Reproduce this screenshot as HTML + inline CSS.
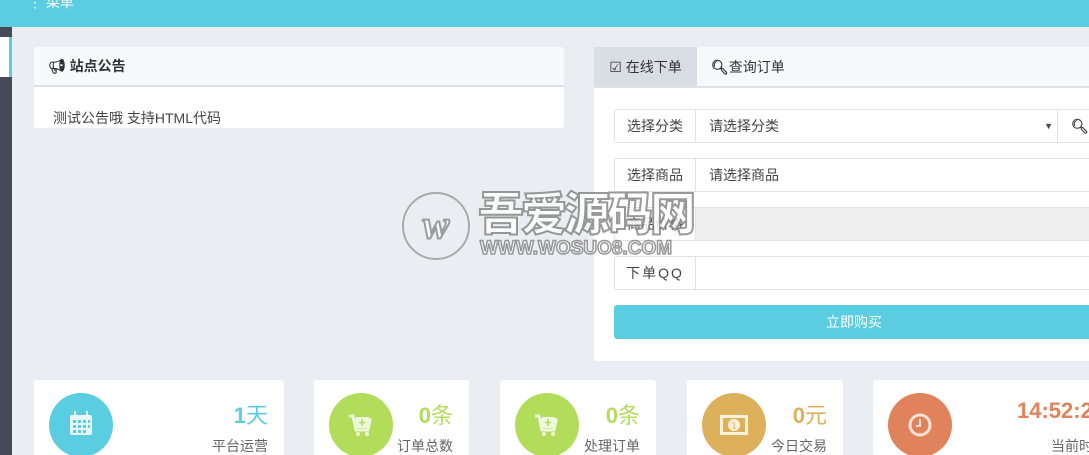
<!DOCTYPE html>
<html><head><meta charset="utf-8"><style>
*{margin:0;padding:0;box-sizing:border-box}
html{width:1089px;height:455px;overflow:hidden}
body{width:1089px;height:455px;overflow:hidden;background:#eaedf1;font-family:"Liberation Sans","Noto Sans CJK SC",sans-serif;position:relative;color:#333;white-space:nowrap}
.abs{position:absolute}
.top{left:0;top:0;width:1089px;height:27px;background:#5bcde0}
.side{left:0;top:27px;width:12px;height:428px;background:#444b57}
.panel{background:#fff;border-radius:3px}
.lbl{position:absolute;left:614px;width:82px;height:34px;border:1px solid #dfe3e8;border-radius:3px 0 0 3px;font-size:14px;line-height:32px;text-align:center;color:#444;background:#fff}
.inp{position:absolute;left:695px;width:400px;height:34px;border:1px solid #dfe3e8;font-size:14px;line-height:32px;padding-left:13px;color:#444;background:#fff}
.card{position:absolute;top:380px;height:80px;background:#fff;border-radius:3px}
.circ{position:absolute;top:13px;left:15px;width:64px;height:64px;border-radius:50%}
.num{position:absolute;top:18px;right:16px;font-size:22px;font-weight:bold}
.num span{font-weight:normal}
.cap{position:absolute;top:56px;right:16px;font-size:14px;color:#666}
</style></head><body>
<div class="abs top"><span style="position:absolute;left:28px;top:-8px;color:#fff;font-size:14px">⋮ 菜单</span></div>
<div class="abs side"><div style="position:absolute;top:10px;left:0;width:12px;height:40px;background:#fff;border-right:3px solid #5bcde0"></div></div>

<div class="abs panel" style="left:34px;top:47px;width:530px;height:81px;overflow:hidden">
 <div style="height:40px;background:#f8f9fb;border-bottom:2px solid #dde1e8;font-size:14px;font-weight:bold;line-height:38px;padding-left:14px;color:#333">&#x1F4E2;&#xFE0E; 站点公告</div>
 <div style="padding:21px 0 0 19px;font-size:14px;color:#444">测试公告哦 支持HTML代码</div>
</div>

<div class="abs panel" style="left:594px;top:47px;width:500px;height:314px">
 <div style="height:41px;background:#f8f9fb;border-bottom:2px solid #dde1e8;font-size:14px;line-height:40px;color:#333">
  <span style="display:inline-block;width:103px;background:#d9dee5;text-align:center;height:39px">☑ 在线下单</span><span style="display:inline-block;padding-left:14px"><b>&#x1F50D;&#xFE0E;</b>查询订单</span>
 </div>
</div>
<div class="lbl" style="top:109px">选择分类</div><div class="inp" style="top:109px;width:363px">请选择分类<span style="position:absolute;right:4px;top:0;font-size:9px">▼</span></div>
<div class="inp" style="top:109px;left:1057px;width:40px;font-weight:bold">&#x1F50D;&#xFE0E;</div>
<div class="lbl" style="top:158px">选择商品</div><div class="inp" style="top:158px">请选择商品</div>
<div class="lbl" style="top:207px">商品价格</div><div class="inp" style="top:207px;background:#eee"></div>
<div class="lbl" style="top:256px;letter-spacing:2px">下单QQ</div><div class="inp" style="top:256px"></div>
<div class="abs" style="left:614px;top:305px;width:480px;height:34px;background:#5bcde0;border-radius:3px;color:#fff;font-size:14px;line-height:34px;text-align:center">立即购买</div>

<!-- watermark -->
<div class="abs" style="left:402px;top:192px;width:68px;height:68px;border:2px solid #999;border-radius:50%;opacity:.8;font:italic bold 40px 'Liberation Serif',serif;color:#fff;-webkit-text-stroke:2px #888;text-align:center;line-height:62px">w</div>
<div class="abs" style="left:478px;top:186px;font:900 46px 'Noto Sans CJK SC',sans-serif;color:#fff;-webkit-text-stroke:2px #888;letter-spacing:-3px;line-height:50px;opacity:.85">吾爱源码网</div>
<div class="abs" style="left:480px;top:238px;font:bold 19px 'Liberation Sans',sans-serif;color:#fff;-webkit-text-stroke:1.5px #888;letter-spacing:0px;opacity:.85">WWW.WOSUO8.COM</div>

<div class="card" style="left:34px;width:250px"><div class="circ" style="background:#5bcde0"><svg width="64" height="64"><g fill="#e6f7fa"><rect x="21" y="22" width="22" height="20" rx="2"/></g><g fill="#5bcde0"><rect x="24" y="27" width="3" height="3"/><rect x="29" y="27" width="3" height="3"/><rect x="34" y="27" width="3" height="3"/><rect x="39" y="27" width="2" height="3"/><rect x="24" y="32" width="3" height="3"/><rect x="29" y="32" width="3" height="3"/><rect x="34" y="32" width="3" height="3"/><rect x="39" y="32" width="2" height="3"/><rect x="24" y="37" width="3" height="3"/><rect x="29" y="37" width="3" height="3"/><rect x="34" y="37" width="3" height="3"/></g><rect x="25" y="18" width="2" height="6" fill="#e6f7fa"/><rect x="37" y="18" width="2" height="6" fill="#e6f7fa"/></svg></div><div class="num" style="color:#5bcde0">1<span>天</span></div><div class="cap">平台运营</div></div>

<div class="card" style="left:314px;width:155px"><div class="circ" style="background:#b1dd5a"><svg width="64" height="64"><path d="M20 23h4l3 14h12l2-10H26" stroke="#eef8dc" stroke-width="3" fill="none"/><rect x="27" y="24" width="13" height="11" fill="#eef8dc"/><path d="M33 26v7M30 29.5h6" stroke="#b1dd5a" stroke-width="1.5"/><circle cx="29" cy="41" r="2" fill="#eef8dc"/><circle cx="38" cy="41" r="2" fill="#eef8dc"/></svg></div><div class="num" style="color:#b1dd5a">0<span>条</span></div><div class="cap">订单总数</div></div>

<div class="card" style="left:500px;width:156px"><div class="circ" style="background:#b1dd5a"><svg width="64" height="64"><path d="M20 23h4l3 14h12l2-10H26" stroke="#eef8dc" stroke-width="3" fill="none"/><rect x="27" y="24" width="13" height="11" fill="#eef8dc"/><path d="M33 26v7M30 29.5h6" stroke="#b1dd5a" stroke-width="1.5"/><circle cx="29" cy="41" r="2" fill="#eef8dc"/><circle cx="38" cy="41" r="2" fill="#eef8dc"/></svg></div><div class="num" style="color:#b1dd5a">0<span>条</span></div><div class="cap">处理订单</div></div>

<div class="card" style="left:687px;width:156px"><div class="circ" style="background:#ddb05c"><svg width="64" height="64"><rect x="18" y="22" width="28" height="20" fill="#fbf1dc"/><rect x="21" y="25" width="22" height="14" fill="#ddb05c"/><circle cx="32" cy="32" r="6" fill="#fbf1dc"/><text x="32" y="35.5" font-size="9" text-anchor="middle" fill="#ddb05c" font-family="Liberation Sans">1</text></svg></div><div class="num" style="color:#ddb05c">0<span>元</span></div><div class="cap">今日交易</div></div>

<div class="card" style="left:873px;width:230px"><div class="circ" style="background:#e0825c"><svg width="64" height="64"><circle cx="32" cy="32" r="10" fill="none" stroke="#fbe2d8" stroke-width="3"/><path d="M32 26v7h-4" stroke="#fbe2d8" stroke-width="2" fill="none"/></svg></div><div class="num" style="color:#e0825c;left:144px;right:auto">14:52:22</div><div class="cap" style="left:178px;right:auto">当前时间</div></div>
</body></html>
